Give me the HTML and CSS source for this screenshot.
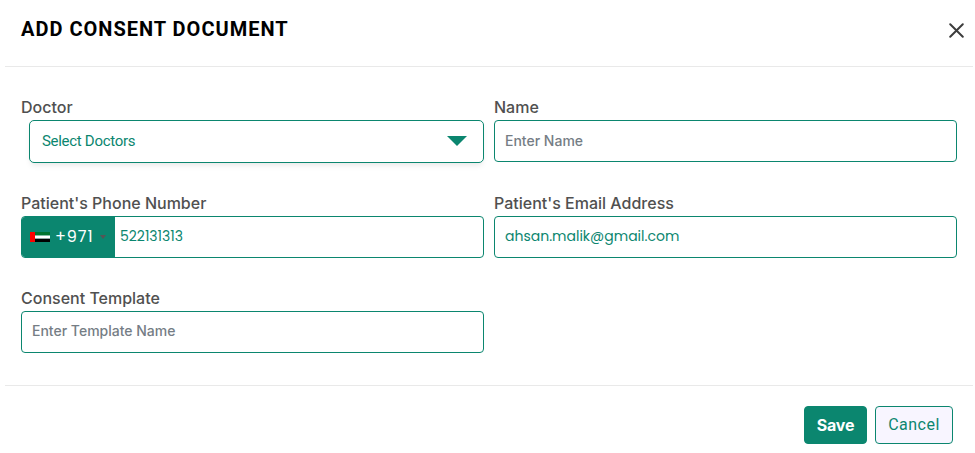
FILE: index.html
```html
<!DOCTYPE html>
<html lang="en">
<head>
<meta charset="utf-8">
<title>Add Consent Document</title>
<link rel="stylesheet" href="styles.css">
</head>
<body>
<main class="modal">
  <header class="modal-header">
    <h1 class="title">ADD CONSENT DOCUMENT</h1>
    <svg class="close" viewBox="0 0 16 16" role="img" aria-label="Close"><path d="M1.3 1.3 14.7 14.7M14.7 1.3 1.3 14.7"/></svg>
  </header>
  <section class="fields">
    <div class="field">
      <div class="label">Doctor</div>
      <div class="control select"><span class="select-text">Select Doctors</span><svg class="arrow" viewBox="0 0 20 10"><path d="M0 0h20L10 10z"/></svg></div>
    </div>
    <div class="field">
      <div class="label">Name</div>
      <div class="control"><span class="placeholder">Enter Name</span></div>
    </div>
    <div class="field">
      <div class="label">Patient's Phone Number</div>
      <div class="control phone">
        <div class="country">
          <svg class="flag" viewBox="0 0 20 10"><path fill="#00732f" d="M0 0h20v3.5H0z"/><path fill="#fff" d="M0 3.5h20v3.2H0z"/><path fill="#000" d="M0 6.7h20V10H0z"/><path fill="#f00" d="M0 0h5v10H0z"/></svg>
          <span class="code">+971</span>
          <svg class="caret" viewBox="0 0 6 4"><path d="M0 0h6L3 4z"/></svg>
        </div>
        <span class="number">522131313</span>
      </div>
    </div>
    <div class="field">
      <div class="label">Patient's Email Address</div>
      <div class="control"><span class="email">ahsan.malik@gmail.com</span></div>
    </div>
    <div class="field">
      <div class="label">Consent Template</div>
      <div class="control"><span class="placeholder raised">Enter Template Name</span></div>
    </div>
  </section>
  <footer class="modal-footer">
    <button class="btn save">Save</button>
    <button class="btn cancel">Cancel</button>
  </footer>
</main>
</body>
</html>
```
FILE: styles.css
```css
* { box-sizing: border-box; }
body { margin: 0; background: #fff; font-family: Inter, sans-serif; }
.modal { width: 968px; margin-left: 5px; }
.modal-header {
  display: flex; justify-content: space-between; align-items: flex-start;
  height: 67px; padding: 17px 9px 0 16px; border-bottom: 1px solid #e9e9e9;
}
.title { margin: 0; font: 700 20px/24px Roboto, sans-serif; letter-spacing: 1px; color: #000; }
.close { width: 15px; height: 15px; margin-top: 6px; fill: none; stroke: #3c3c3c; stroke-width: 2.1; stroke-linecap: round; }
.fields {
  display: grid; grid-template-columns: 463px 463px; column-gap: 10px;
  grid-template-rows: 96px 95px 96px; height: 318px; padding: 29px 16px 0;
}
.label { height: 24px; font-size: 16px; font-weight: 500; line-height: 22px; color: #505050; }
.control {
  display: flex; align-items: center; height: 42px; padding: 0 10px;
  border: 1px solid #0b866f; border-radius: 4px; color: #0b866f; overflow: hidden;
}
.select {
  height: 43px; margin-left: 8px; padding: 0 16px 2px 12px; justify-content: space-between;
  border-radius: 5px; box-shadow: 0 4px 6px -2px rgba(0, 0, 0, .1);
}
.select-text { font: 400 15px/20px Roboto, sans-serif; letter-spacing: -.3px; }
.arrow { width: 20px; height: 10px; fill: #0b866f; }
.placeholder { font-size: 14px; font-weight: 500; line-height: 20px; color: #757d85; }
.raised { padding-bottom: 2px; }
.phone { padding: 0; }
.country { display: flex; align-items: center; width: 93px; height: 42px; padding-left: 8px; background: #0b866f; }
.flag { width: 20px; height: 10px; }
.code { width: 39px; margin-left: 5px; font: 400 16px/24px Poppins, Inter, sans-serif; letter-spacing: .9px; color: #fff; }
.caret { width: 6px; height: 4px; margin-left: 6px; fill: #555; }
.number { padding: 0 0 2px 5px; font: 400 14px/20px Poppins, Inter, sans-serif; }
.email { padding-bottom: 2px; font: 400 14px/20px Poppins, Inter, sans-serif; }
.modal-footer {
  display: flex; justify-content: flex-end; gap: 8px; padding: 20px 20px 0 0; border-top: 1px solid #e9e9e9;
}
.btn { height: 38px; padding: 0; border: 1px solid #0b866f; border-radius: 4px; }
.save { width: 63px; background: #0b866f; color: #fff; font: 700 16px/36px Inter, sans-serif; letter-spacing: -.25px; }
.cancel { width: 78px; background: #f8f5ff; color: #0b866f; font: 400 16px/36px Roboto, sans-serif; letter-spacing: .5px; }
```
